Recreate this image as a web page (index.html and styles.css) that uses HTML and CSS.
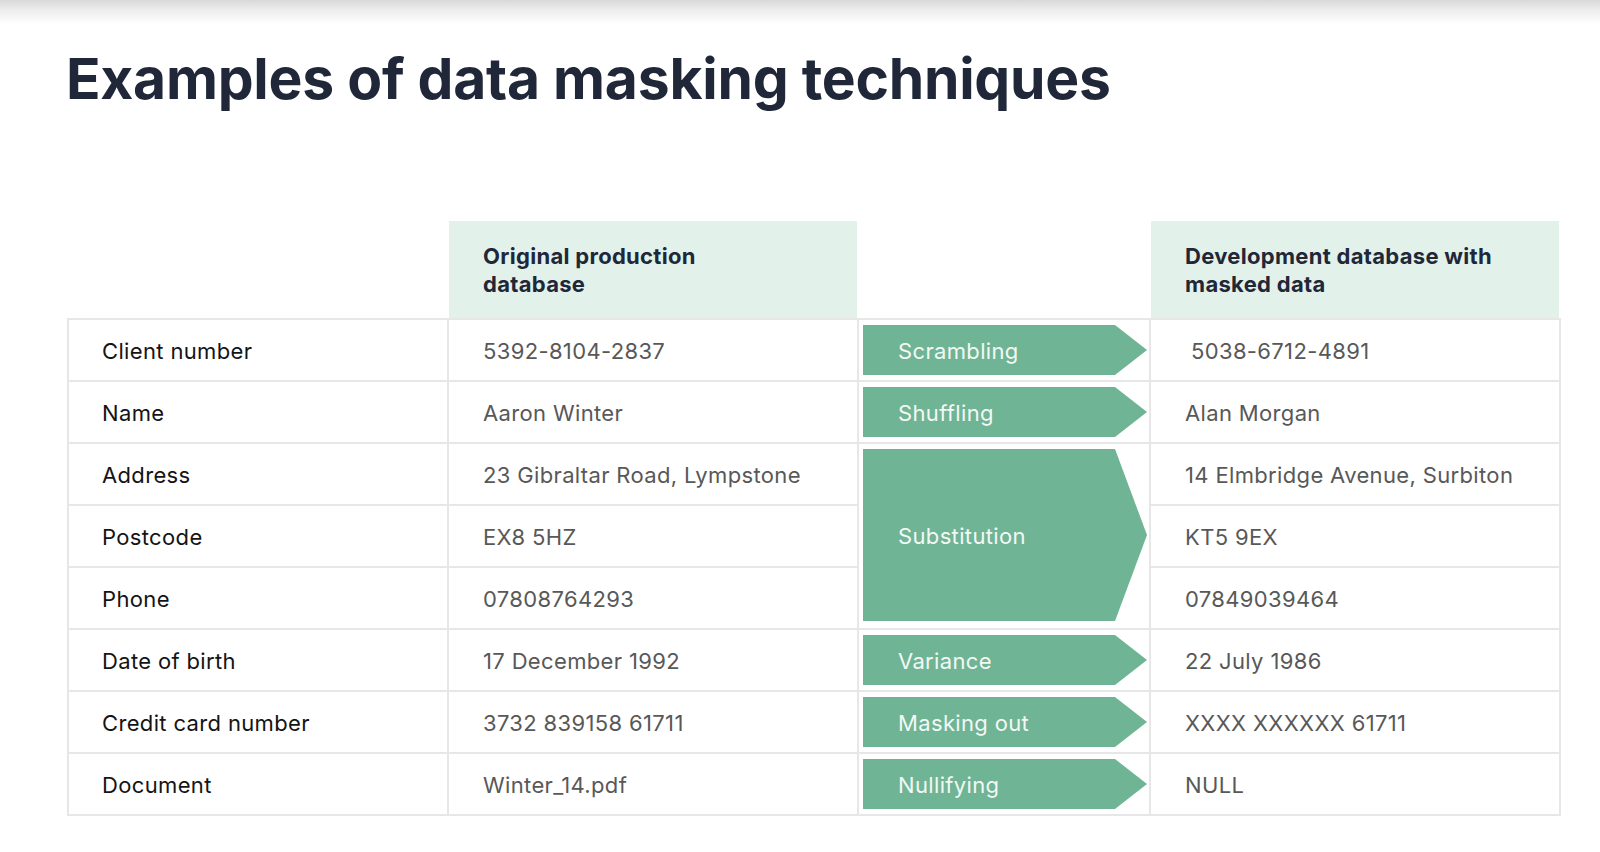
FILE: index.html
```html
<!DOCTYPE html>
<html lang="en">
<head>
<meta charset="utf-8">
<title>Examples of data masking techniques</title>
<link rel="stylesheet" href="styles.css">
</head>
<body>
<div class="topshade"></div>
<h1 class="title">Examples of data masking techniques</h1>
<div class="sheet">
  <div class="head">
    <div class="hcell"></div>
    <div class="hcell green">Original production<br>database</div>
    <div class="hcell"></div>
    <div class="hcell green">Development database with<br>masked data</div>
  </div>
  <div class="body">
    <div class="cell label">Client number</div>
    <div class="cell value">5392-8104-2837</div>
    <div class="cell tech"><div class="arrow">Scrambling</div></div>
    <div class="cell value shift">5038-6712-4891</div>

    <div class="cell label">Name</div>
    <div class="cell value">Aaron Winter</div>
    <div class="cell tech"><div class="arrow">Shuffling</div></div>
    <div class="cell value">Alan Morgan</div>

    <div class="cell label">Address</div>
    <div class="cell value">23 Gibraltar Road, Lympstone</div>
    <div class="cell tech tall"><div class="arrow">Substitution</div></div>
    <div class="cell value">14 Elmbridge Avenue, Surbiton</div>

    <div class="cell label">Postcode</div>
    <div class="cell value">EX8 5HZ</div>
    <div class="cell value">KT5 9EX</div>

    <div class="cell label">Phone</div>
    <div class="cell value">07808764293</div>
    <div class="cell value">07849039464</div>

    <div class="cell label">Date of birth</div>
    <div class="cell value">17 December 1992</div>
    <div class="cell tech"><div class="arrow">Variance</div></div>
    <div class="cell value">22 July 1986</div>

    <div class="cell label">Credit card number</div>
    <div class="cell value">3732 839158 61711</div>
    <div class="cell tech"><div class="arrow">Masking out</div></div>
    <div class="cell value">XXXX XXXXXX 61711</div>

    <div class="cell label">Document</div>
    <div class="cell value">Winter_14.pdf</div>
    <div class="cell tech"><div class="arrow">Nullifying</div></div>
    <div class="cell value">NULL</div>
  </div>
</div>
</body>
</html>
```

FILE: styles.css
```css
* { box-sizing: border-box; }

html, body {
  margin: 0;
  padding: 0;
  background: #ffffff;
}

body {
  width: 1600px;
  height: 852px;
  overflow: hidden;
  font-family: Inter, "Noto Sans", "Liberation Sans", sans-serif;
}

.topshade {
  height: 24px;
  background: linear-gradient(to bottom, #d8d8d8 0%, #ececec 40%, #ffffff 100%);
}

.title {
  margin: 21px 0 0 66px;
  font-size: 57px;
  line-height: 68px;
  font-weight: 700;
  color: #1f2738;
  letter-spacing: -0.25px;
}

.sheet {
  margin: 108px 0 0 67px;
  width: 1494px;
}

.head {
  display: grid;
  grid-template-columns: 382px 410px 292px 410px;
  height: 97px;
}

.hcell {
  border-right: 2px solid transparent;
  background-clip: padding-box;
  display: flex;
  align-items: center;
  padding-left: 34px;
  font-size: 22px;
  line-height: 28px;
  font-weight: 700;
  letter-spacing: 0.3px;
  color: #1f2738;
}

.hcell.green {
  background-color: #e2f2ea;
}

.body {
  display: grid;
  grid-template-columns: 380px 410px 292px 410px;
  grid-auto-rows: 62px;
  border-left: 2px solid #e7e7e7;
  border-top: 2px solid #e7e7e7;
}

.cell {
  border-right: 2px solid #e7e7e7;
  border-bottom: 2px solid #e7e7e7;
  display: flex;
  align-items: center;
  padding-top: 2px;
  padding-left: 33px;
  font-size: 22px;
  letter-spacing: 0.35px;
}

.label {
  color: #141414;
}

.value {
  color: #585858;
  padding-left: 34px;
}

.value.shift {
  padding-left: 40px;
}

.tech {
  grid-column: 3;
  padding: 5px 2px 5px 4px;
  align-items: stretch;
}

.tech.tall {
  grid-row: span 3;
  padding-bottom: 7px;
}

.arrow {
  flex: 1;
  display: flex;
  align-items: center;
  padding-top: 2px;
  padding-left: 35px;
  background: #6fb494;
  color: #f3f8f5;
  font-size: 22px;
  letter-spacing: 0.35px;
  clip-path: polygon(0 0, calc(100% - 32px) 0, 100% 50%, calc(100% - 32px) 100%, 0 100%);
}
```
